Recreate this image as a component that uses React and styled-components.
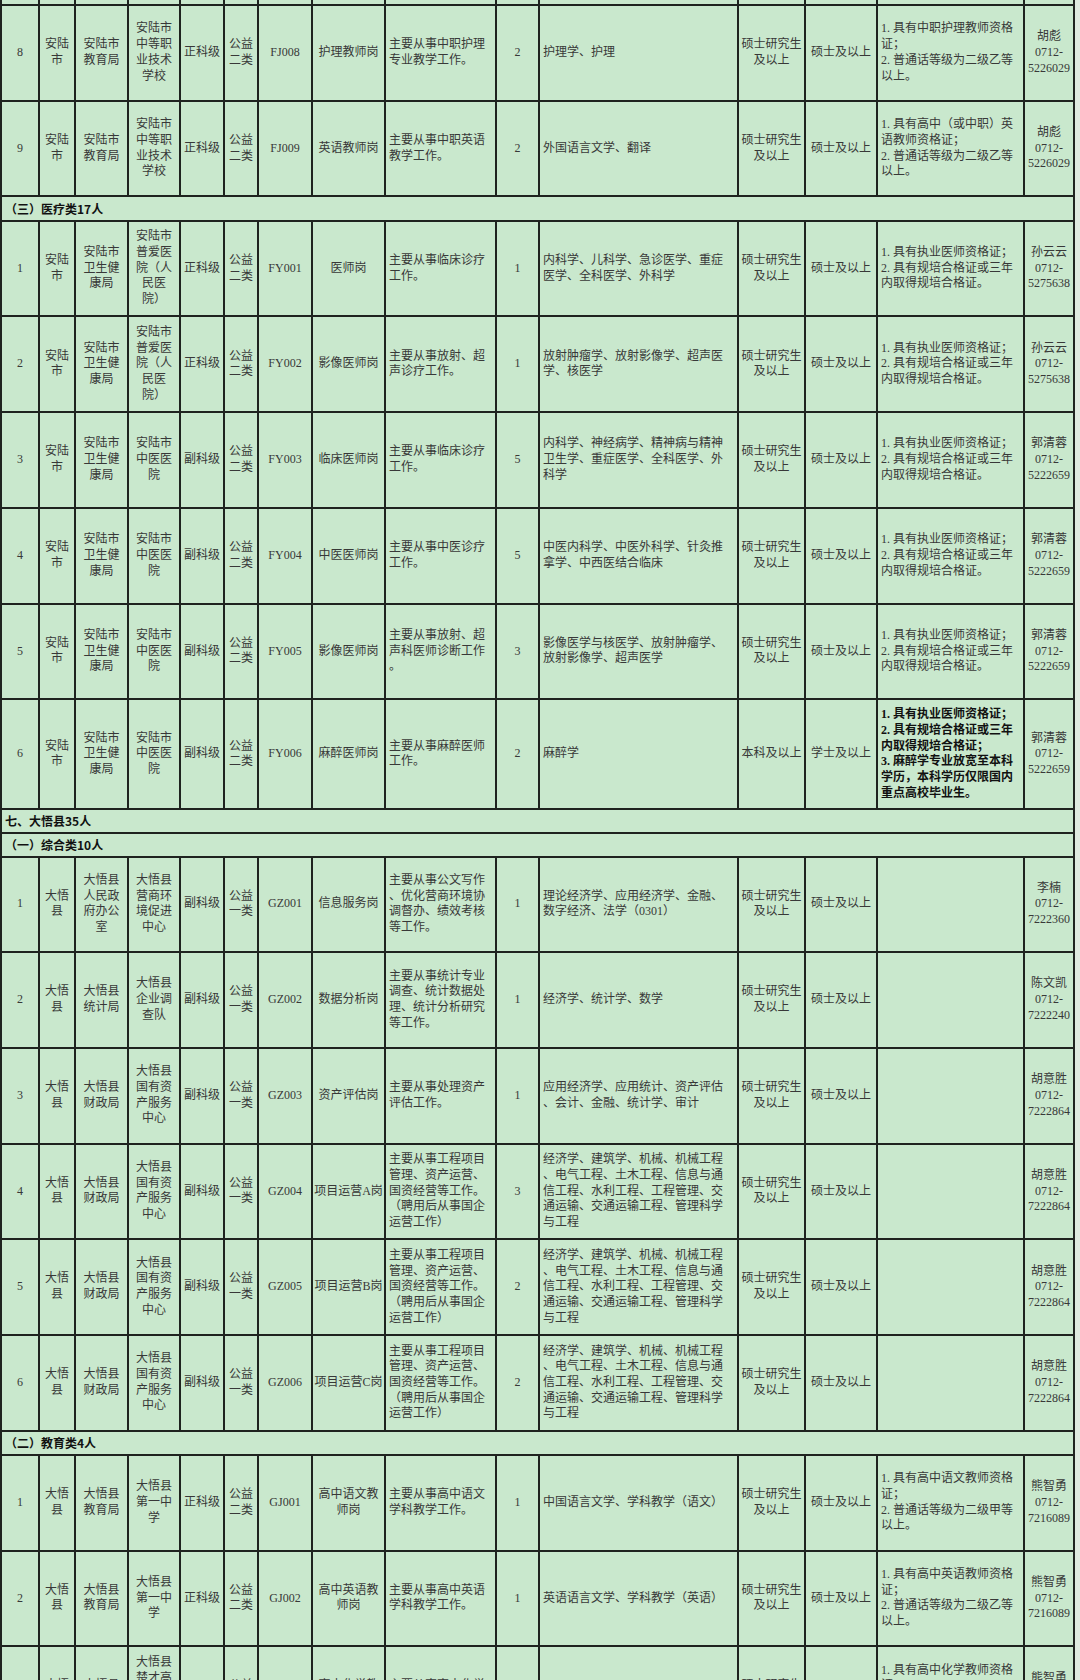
import React from 'react'
import styled, { createGlobalStyle } from 'styled-components'

const GlobalStyle = createGlobalStyle`
  html, body {
    margin: 0;
    padding: 0;
    background: #dfeadf;
  }
`

export const Page = styled.div`
  width: 1080px;
  height: 1680px;
  overflow: hidden;
  background: #dfeadf;
`

export const Sheet = styled.table`
  width: 1073px;
  table-layout: fixed;
  border-collapse: collapse;
  background: #c9e8cd;
  color: #383838;
  font-family: "Liberation Serif", "Noto Sans CJK SC", serif;
  font-size: 12px;
  line-height: 15.7px;
`

export const Col = styled.col`
  width: ${(p) => p.$w}px;
`

export const Row = styled.tr`
  height: ${(p) => p.$h}px;
`

export const Cell = styled.td`
  border: 2px solid #1f231f;
  border-top: ${(p) => (p.$cut ? 'none' : '2px solid #1f231f')};
  padding: 0 ${(p) => (p.$left ? '2px' : '1px')} 0 ${(p) => p.$indent || 1}px;
  text-align: ${(p) => (p.$left ? 'left' : 'center')};
  vertical-align: middle;
  white-space: pre-line;
  overflow: hidden;
  font-weight: ${(p) => (p.$bold ? 700 : 400)};
  color: ${(p) => (p.$bold ? '#111' : '#383838')};
`

export const SectionCell = styled.td`
  border: 2px solid #1f231f;
  padding: 0 3px;
  text-align: left;
  vertical-align: middle;
  font-family: "Noto Sans CJK SC", "Liberation Sans", sans-serif;
  font-weight: 700;
  font-size: 12px;
  color: #111;
`

const WIDTHS = [38, 36, 53, 52, 44, 34, 54, 73, 111, 43, 199, 67, 72, 147, 50]
// columns with left aligned text and their indent
const LEFT = { 8: 3, 10: 3, 13: 3 }

const EDU = '硕士研究生\n及以上'
const DEG = '硕士及以上'
const DOC_COND = '1. 具有执业医师资格证；\n2. 具有规培合格证或三年\n内取得规培合格证。'
const AL = ['安陆\n市', '安陆市\n卫生健\n康局']
const PUAI = '安陆市\n普爱医\n院（人\n民医\n院）'
const ZY = '安陆市\n中医医\n院'
const GUO = '郭清蓉\n0712-\n5222659'
const SUN = '孙云云\n0712-\n5275638'
const HU = '胡彪\n0712-\n5226029'
const DW = '大悟\n县'
const ZC = ['大悟县\n财政局', '大悟县\n国有资\n产服务\n中心']
const PROJ_DESC = '主要从事工程项目\n管理、资产运营、\n国资经营等工作。\n（聘用后从事国企\n运营工作）'
const PROJ_MAJOR = '经济学、建筑学、机械、机械工程\n、电气工程、土木工程、信息与通\n信工程、水利工程、工程管理、交\n通运输、交通运输工程、管理科学\n与工程'
const HU2 = '胡意胜\n0712-\n7222864'
const XIONG = '熊智勇\n0712-\n7216089'
const JY = ['大悟县\n教育局', '大悟县\n第一中\n学']

const H = 95.7

const rows = [
  { cut: true, h: 5, cells: Array(15).fill('') },
  { h: H, cells: ['8', '安陆\n市', '安陆市\n教育局', '安陆市\n中等职\n业技术\n学校', '正科级', '公益\n二类', 'FJ008', '护理教师岗', '主要从事中职护理\n专业教学工作。', '2', '护理学、护理', EDU, DEG, '1. 具有中职护理教师资格\n证；\n2. 普通话等级为二级乙等\n以上。', HU] },
  { h: H, cells: ['9', '安陆\n市', '安陆市\n教育局', '安陆市\n中等职\n业技术\n学校', '正科级', '公益\n二类', 'FJ009', '英语教师岗', '主要从事中职英语\n教学工作。', '2', '外国语言文学、翻译', EDU, DEG, '1. 具有高中（或中职）英\n语教师资格证；\n2. 普通话等级为二级乙等\n以上。', HU] },
  { section: '（三）医疗类17人', h: 24.4 },
  { h: H, cells: ['1', ...AL, PUAI, '正科级', '公益\n二类', 'FY001', '医师岗', '主要从事临床诊疗\n工作。', '1', '内科学、儿科学、急诊医学、重症\n医学、全科医学、外科学', EDU, DEG, DOC_COND, SUN] },
  { h: H, cells: ['2', ...AL, PUAI, '正科级', '公益\n二类', 'FY002', '影像医师岗', '主要从事放射、超\n声诊疗工作。', '1', '放射肿瘤学、放射影像学、超声医\n学、核医学', EDU, DEG, DOC_COND, SUN] },
  { h: H, cells: ['3', ...AL, ZY, '副科级', '公益\n二类', 'FY003', '临床医师岗', '主要从事临床诊疗\n工作。', '5', '内科学、神经病学、精神病与精神\n卫生学、重症医学、全科医学、外\n科学', EDU, DEG, DOC_COND, GUO] },
  { h: H, cells: ['4', ...AL, ZY, '副科级', '公益\n二类', 'FY004', '中医医师岗', '主要从事中医诊疗\n工作。', '5', '中医内科学、中医外科学、针灸推\n拿学、中西医结合临床', EDU, DEG, DOC_COND, GUO] },
  { h: H, cells: ['5', ...AL, ZY, '副科级', '公益\n二类', 'FY005', '影像医师岗', '主要从事放射、超\n声科医师诊断工作\n。', '3', '影像医学与核医学、放射肿瘤学、\n放射影像学、超声医学', EDU, DEG, DOC_COND, GUO] },
  { h: 110, boldCond: true, cells: ['6', ...AL, ZY, '副科级', '公益\n二类', 'FY006', '麻醉医师岗', '主要从事麻醉医师\n工作。', '2', '麻醉学', '本科及以上', '学士及以上', '1. 具有执业医师资格证；\n2. 具有规培合格证或三年\n内取得规培合格证；\n3. 麻醉学专业放宽至本科\n学历，本科学历仅限国内\n重点高校毕业生。', GUO] },
  { section: '七、大悟县35人', h: 23.3 },
  { section: '（一）综合类10人', h: 24 },
  { h: H, cells: ['1', DW, '大悟县\n人民政\n府办公\n室', '大悟县\n营商环\n境促进\n中心', '副科级', '公益\n一类', 'GZ001', '信息服务岗', '主要从事公文写作\n、优化营商环境协\n调督办、绩效考核\n等工作。', '1', '理论经济学、应用经济学、金融、\n数字经济、法学（0301）', EDU, DEG, '', '李楠\n0712-\n7222360'] },
  { h: H, cells: ['2', DW, '大悟县\n统计局', '大悟县\n企业调\n查队', '副科级', '公益\n一类', 'GZ002', '数据分析岗', '主要从事统计专业\n调查、统计数据处\n理、统计分析研究\n等工作。', '1', '经济学、统计学、数学', EDU, DEG, '', '陈文凯\n0712-\n7222240'] },
  { h: H, cells: ['3', DW, ...ZC, '副科级', '公益\n一类', 'GZ003', '资产评估岗', '主要从事处理资产\n评估工作。', '1', '应用经济学、应用统计、资产评估\n、会计、金融、统计学、审计', EDU, DEG, '', HU2] },
  { h: H, cells: ['4', DW, ...ZC, '副科级', '公益\n一类', 'GZ004', '项目运营A岗', PROJ_DESC, '3', PROJ_MAJOR, EDU, DEG, '', HU2] },
  { h: H, cells: ['5', DW, ...ZC, '副科级', '公益\n一类', 'GZ005', '项目运营B岗', PROJ_DESC, '2', PROJ_MAJOR, EDU, DEG, '', HU2] },
  { h: H, cells: ['6', DW, ...ZC, '副科级', '公益\n一类', 'GZ006', '项目运营C岗', PROJ_DESC, '2', PROJ_MAJOR, EDU, DEG, '', HU2] },
  { section: '（二）教育类4人', h: 24.3 },
  { h: H, cells: ['1', DW, ...JY, '正科级', '公益\n二类', 'GJ001', '高中语文教\n师岗', '主要从事高中语文\n学科教学工作。', '1', '中国语言文学、学科教学（语文）', EDU, DEG, '1. 具有高中语文教师资格\n证；\n2. 普通话等级为二级甲等\n以上。', XIONG] },
  { h: H, cells: ['2', DW, ...JY, '正科级', '公益\n二类', 'GJ002', '高中英语教\n师岗', '主要从事高中英语\n学科教学工作。', '1', '英语语言文学、学科教学（英语）', EDU, DEG, '1. 具有高中英语教师资格\n证；\n2. 普通话等级为二级乙等\n以上。', XIONG] },
  { h: H, cells: ['3', DW, '大悟县\n教育局', '大悟县\n楚才高\n级中学\n（大悟\n二中）', '正科级', '公益\n二类', 'GJ003', '高中化学教\n师岗', '主要从事高中化学\n学科教学工作。', '1', '化学、学科教学（化学）', EDU, DEG, '1. 具有高中化学教师资格\n证；\n2. 普通话等级为二级乙等\n以上。', XIONG] },
]

const App = () => {
  return (
    <Page>
      <GlobalStyle />
      <Sheet>
        <colgroup>
          {WIDTHS.map((w, i) => <Col key={i} $w={w} />)}
        </colgroup>
        <tbody>
          {rows.map((r, i) =>
            r.section ? (
              <Row key={i} $h={r.h}>
                <SectionCell colSpan={15}>{r.section}</SectionCell>
              </Row>
            ) : (
              <Row key={i} $h={r.h}>
                {r.cells.map((c, j) => (
                  <Cell
                    key={j}
                    $cut={r.cut}
                    $left={LEFT[j] !== undefined}
                    $indent={LEFT[j]}
                    $bold={r.boldCond && j === 13}
                  >
                    {c}
                  </Cell>
                ))}
              </Row>
            )
          )}
        </tbody>
      </Sheet>
    </Page>
  )
}

export default App
